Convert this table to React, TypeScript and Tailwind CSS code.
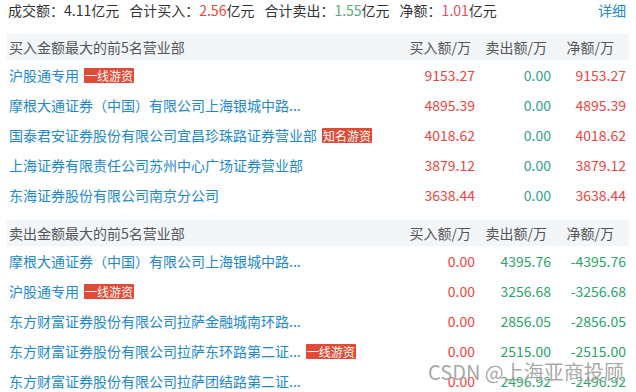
import React from "react";

type Row = { name: string; tag?: string; buy: string; sell: string; net: string };

const buyRows: Row[] = [
  { name: "沪股通专用", tag: "一线游资", buy: "9153.27", sell: "0.00", net: "9153.27" },
  { name: "摩根大通证券（中国）有限公司上海银城中路...", buy: "4895.39", sell: "0.00", net: "4895.39" },
  { name: "国泰君安证券股份有限公司宜昌珍珠路证券营业部", tag: "知名游资", buy: "4018.62", sell: "0.00", net: "4018.62" },
  { name: "上海证券有限责任公司苏州中心广场证券营业部", buy: "3879.12", sell: "0.00", net: "3879.12" },
  { name: "东海证券股份有限公司南京分公司", buy: "3638.44", sell: "0.00", net: "3638.44" },
];

const sellRows: Row[] = [
  { name: "摩根大通证券（中国）有限公司上海银城中路...", buy: "0.00", sell: "4395.76", net: "-4395.76" },
  { name: "沪股通专用", tag: "一线游资", buy: "0.00", sell: "3256.68", net: "-3256.68" },
  { name: "东方财富证券股份有限公司拉萨金融城南环路...", buy: "0.00", sell: "2856.05", net: "-2856.05" },
  { name: "东方财富证券股份有限公司拉萨东环路第二证...", tag: "一线游资", buy: "0.00", sell: "2515.00", net: "-2515.00" },
  { name: "东方财富证券股份有限公司拉萨团结路第二证...", buy: "0.00", sell: "2496.92", net: "-2496.92" },
];

const RED = "text-[#e8473f]";
const GREEN = "text-[#2ea36a]";

function Header({ title }: { title: string }) {
  return (
    <div className="flex h-[26px] items-center bg-[#f3f6f9] text-[#555]">
      <div className="flex-1 pl-[2px]">{title}</div>
      <div className="w-[76px] pr-[4px] text-right">买入额/万</div>
      <div className="w-[76px] pr-[4px] text-right">卖出额/万</div>
      <div className="w-[75px] pr-[12px] text-right">净额/万</div>
      <div className="w-[3px]" />
    </div>
  );
}

function DataRow({ r, sellSide }: { r: Row; sellSide: boolean }) {
  return (
    <div className="flex h-[30px] items-center">
      <div className="flex flex-1 items-center pl-[2px] text-[#2389cc] whitespace-nowrap">
        <span>{r.name}</span>
        {r.tag && (
          <span className="ml-[5px] inline-flex h-[15px] items-center rounded-[1px] bg-[#e04a36] px-[1px] text-[12px] leading-[15px] text-white">
            {r.tag}
          </span>
        )}
      </div>
      <div className={`w-[76px] text-right ${RED}`}>{r.buy}</div>
      <div className={`w-[76px] text-right ${sellSide ? GREEN : "text-[#2ea38a]"}`}>{r.sell}</div>
      <div className={`w-[75px] text-right ${sellSide ? GREEN : RED}`}>{r.net}</div>
      <div className="w-[3px]" />
    </div>
  );
}

export default function App() {
  return (
    <div
      className="relative h-[392px] w-[636px] overflow-hidden bg-white text-[14px] leading-[20px]"
      style={{ fontFamily: '"Noto Sans CJK SC", "Noto Sans", sans-serif' }}
    >
      <div className="flex h-[20px] items-center pl-[8px] pr-[10px] text-[#333]">
        <div className="flex gap-[10px]">
          <span>
            成交额：4.11亿元
          </span>
          <span>
            合计买入：<span className="text-[#e8473f]">2.56</span>亿元
          </span>
          <span>
            合计卖出：<span className="text-[#5ea878]">1.55</span>亿元
          </span>
          <span>
            净额：<span className="text-[#e0505a]">1.01</span>亿元
          </span>
        </div>
        <div className="flex-1" />
        <span className="text-[#2389cc]">详细</span>
      </div>

      <div className="mt-[14px] px-[7px]">
        <Header title="买入金额最大的前5名营业部" />
        {buyRows.map((r, i) => (
          <DataRow key={i} r={r} sellSide={false} />
        ))}
        <div className="h-[10px]" />
        <Header title="卖出金额最大的前5名营业部" />
        {sellRows.map((r, i) => (
          <DataRow key={i} r={r} sellSide={true} />
        ))}
      </div>

      <div
        className="absolute left-[428px] top-[360px] whitespace-nowrap text-[20px] leading-[24px] text-[rgba(90,90,90,0.55)]"
        style={{ textShadow: "0 0 2px #fff" }}
      >
        CSDN @上海亚商投顾
      </div>
    </div>
  );
}
